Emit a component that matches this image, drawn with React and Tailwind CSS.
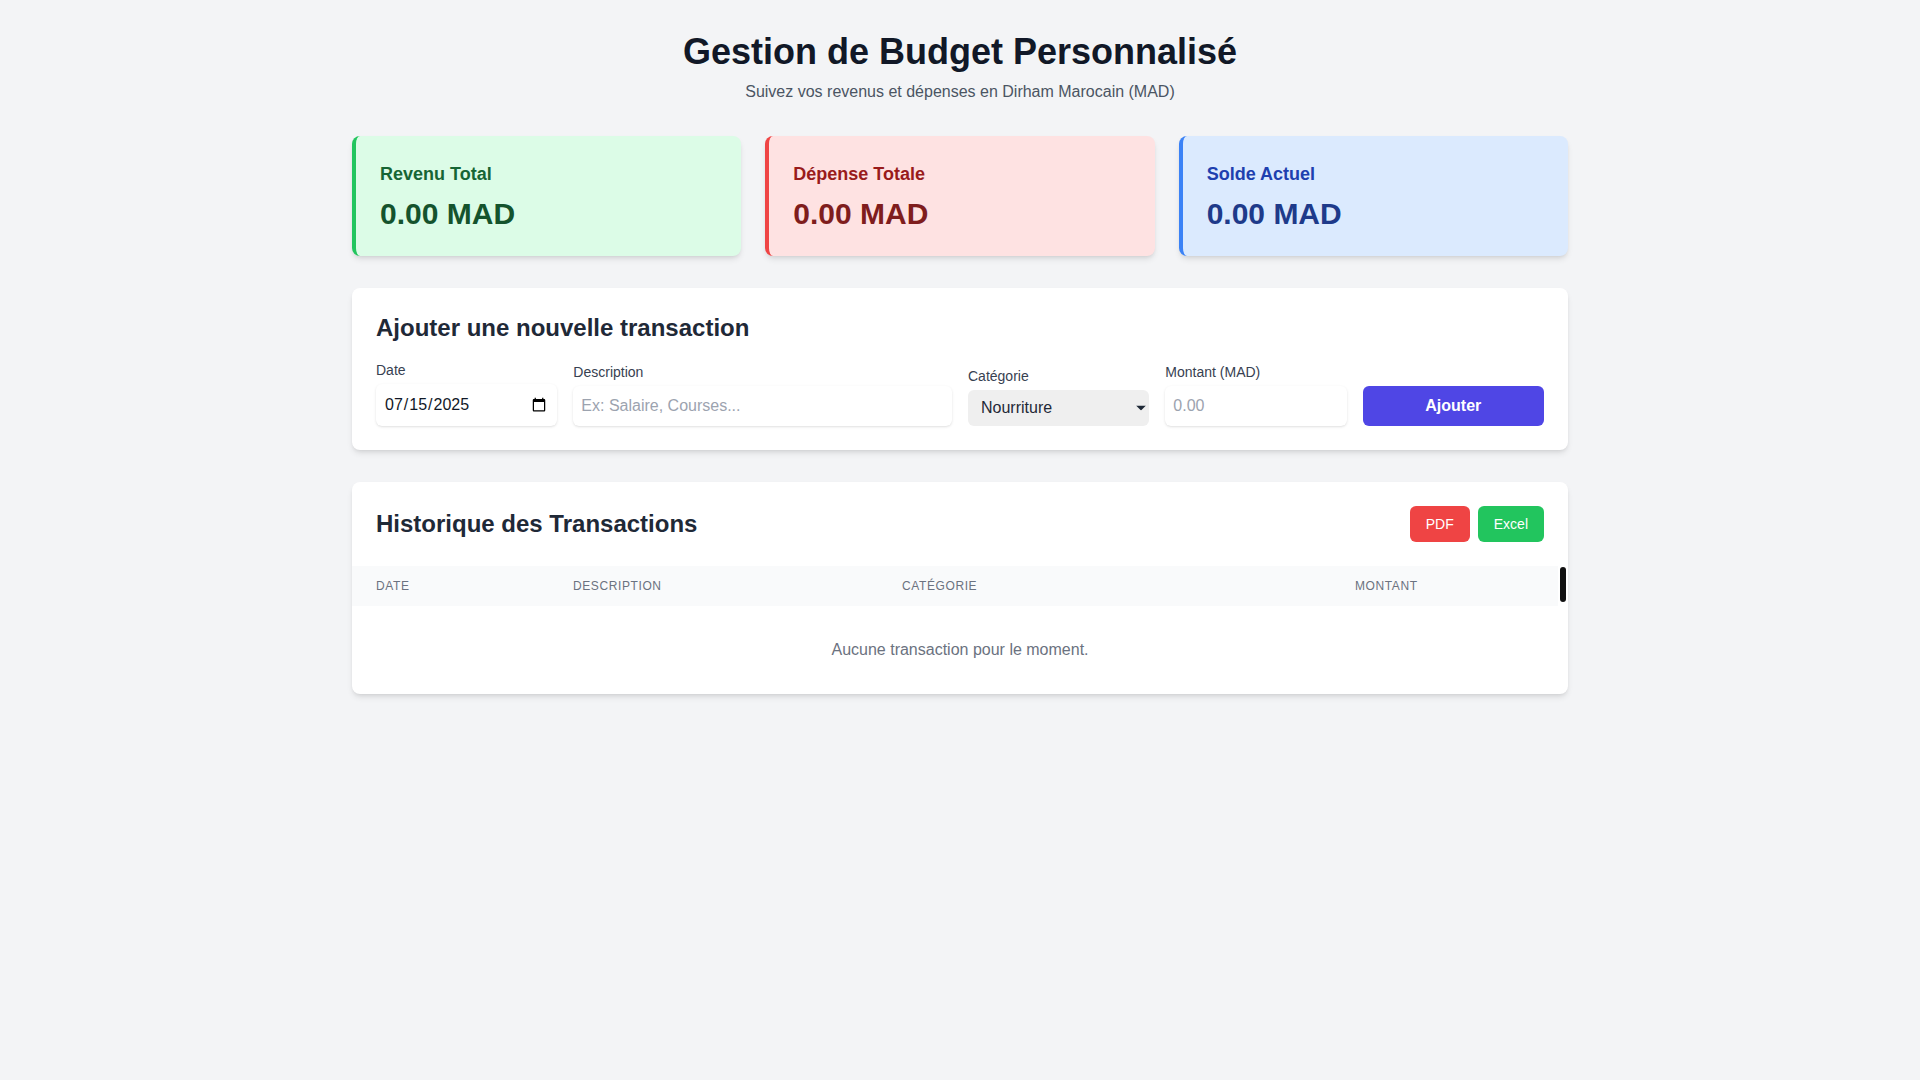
import React, { useState } from 'react';

const SummaryCard = ({ title, value, tone }) => {
  const tones = {
    green: 'bg-[#dcfce7] border-[#22c55e] text-[#166534]',
    red: 'bg-[#fee2e2] border-[#ef4444] text-[#991b1b]',
    blue: 'bg-[#dbeafe] border-[#3b82f6] text-[#1e40af]',
  };
  const valueTones = {
    green: 'text-[#14532d]',
    red: 'text-[#7f1d1d]',
    blue: 'text-[#1e3a8a]',
  };
  return (
    <div className={`rounded-lg border-l-4 p-6 shadow-md ${tones[tone]}`}>
      <h3 className="text-lg font-semibold mb-2">{title}</h3>
      <p className={`text-3xl font-bold ${valueTones[tone]}`}>{value}</p>
    </div>
  );
};

const App = () => {
  const [date, setDate] = useState('2025-07-15');
  const [description, setDescription] = useState('');
  const [category, setCategory] = useState('Nourriture');
  const [amount, setAmount] = useState('');

  const th = 'px-6 py-3 text-left text-xs font-medium uppercase tracking-wider text-[#6b7280]';

  return (
    <div className="min-h-screen bg-[#f3f4f6] font-['Liberation_Sans',Arial,sans-serif]">
      <div className="max-w-7xl mx-auto p-8">
        <header className="text-center mb-8">
          <h1 className="text-4xl font-bold text-[#111827] mb-2">Gestion de Budget Personnalisé</h1>
          <p className="text-base text-[#4b5563]">Suivez vos revenus et dépenses en Dirham Marocain (MAD)</p>
        </header>

        <div className="grid grid-cols-3 gap-6 mb-8">
          <SummaryCard title="Revenu Total" value="0.00 MAD" tone="green" />
          <SummaryCard title="Dépense Totale" value="0.00 MAD" tone="red" />
          <SummaryCard title="Solde Actuel" value="0.00 MAD" tone="blue" />
        </div>

        {/* formulaire */}
        <section className="bg-white rounded-lg shadow-md p-6 mb-8">
          <h2 className="text-2xl font-semibold text-[#1f2937] mb-4">Ajouter une nouvelle transaction</h2>
          <form className="grid grid-cols-6 gap-4 items-end" onSubmit={(e) => e.preventDefault()}>
            <div>
              <label className="block text-sm font-medium text-[#374151]">Date</label>
              <input
                type="date"
                value={date}
                onChange={(e) => setDate(e.target.value)}
                className="mt-1 block h-[42px] w-full rounded-md bg-white p-2 text-[#111827] shadow-sm"
              />
            </div>
            <div className="col-span-2">
              <label className="block text-sm font-medium text-[#374151]">Description</label>
              <input
                type="text"
                value={description}
                onChange={(e) => setDescription(e.target.value)}
                placeholder="Ex: Salaire, Courses..."
                className="mt-1 block w-full rounded-md bg-white p-2 text-[#111827] shadow-sm placeholder:text-[#9ca3af] outline-none"
              />
            </div>
            <div>
              <label className="block text-sm font-medium text-[#374151]">Catégorie</label>
              <div className="relative mt-1">
                <select
                  value={category}
                  onChange={(e) => setCategory(e.target.value)}
                  className="block h-9 w-full appearance-none rounded-md bg-[#efefef] pl-[13px] pr-6 text-[#1f2937] outline-none"
                >
                  <option>Nourriture</option>
                  <option>Transport</option>
                  <option>Logement</option>
                  <option>Loisirs</option>
                  <option>Salaire</option>
                  <option>Autre</option>
                </select>
                <svg
                  className="pointer-events-none absolute right-[3px] top-1/2 -translate-y-1/2"
                  width="10"
                  height="5"
                  viewBox="0 0 10 5"
                >
                  <path d="M0 0h10L5 5z" fill="#1f2937" />
                </svg>
              </div>
            </div>
            <div>
              <label className="block text-sm font-medium text-[#374151]">Montant (MAD)</label>
              <input
                type="number"
                value={amount}
                onChange={(e) => setAmount(e.target.value)}
                placeholder="0.00"
                className="mt-1 block w-full rounded-md bg-white p-2 text-[#111827] shadow-sm placeholder:text-[#9ca3af] outline-none"
              />
            </div>
            <button type="submit" className="w-full rounded-md bg-[#4f46e5] py-2 px-4 text-base font-semibold text-white">
              Ajouter
            </button>
          </form>
        </section>

        {/* historique */}
        <section className="bg-white rounded-lg shadow-md overflow-hidden">
          <div className="flex items-center justify-between p-6">
            <h2 className="text-2xl font-semibold text-[#1f2937]">Historique des Transactions</h2>
            <div className="flex gap-2">
              <button className="rounded-md bg-[#ef4444] px-4 py-2 text-sm text-white">PDF</button>
              <button className="rounded-md bg-[#22c55e] px-4 py-2 text-sm text-white">Excel</button>
            </div>
          </div>
          <table className="w-full table-fixed">
            <thead>
              <tr>
                <th className={`w-[197px] bg-[#f9fafb] ${th}`}>Date</th>
                <th className={`w-[329px] bg-[#f9fafb] ${th}`}>Description</th>
                <th className={`w-[453px] bg-[#f9fafb] ${th}`}>Catégorie</th>
                <th className={`bg-[#f9fafb] ${th}`}>Montant</th>
                <th className="w-[10px] bg-white p-0 align-top">
                  <div className="ml-[2px] mt-[1px] h-[35px] w-[6px] rounded-full bg-[#111]" />
                </th>
              </tr>
            </thead>
            <tbody>
              <tr>
                <td colSpan={5} className="px-6 py-8 text-center text-base text-[#6b7280]">
                  Aucune transaction pour le moment.
                </td>
              </tr>
            </tbody>
          </table>
        </section>
      </div>
    </div>
  );
};

export default App;
